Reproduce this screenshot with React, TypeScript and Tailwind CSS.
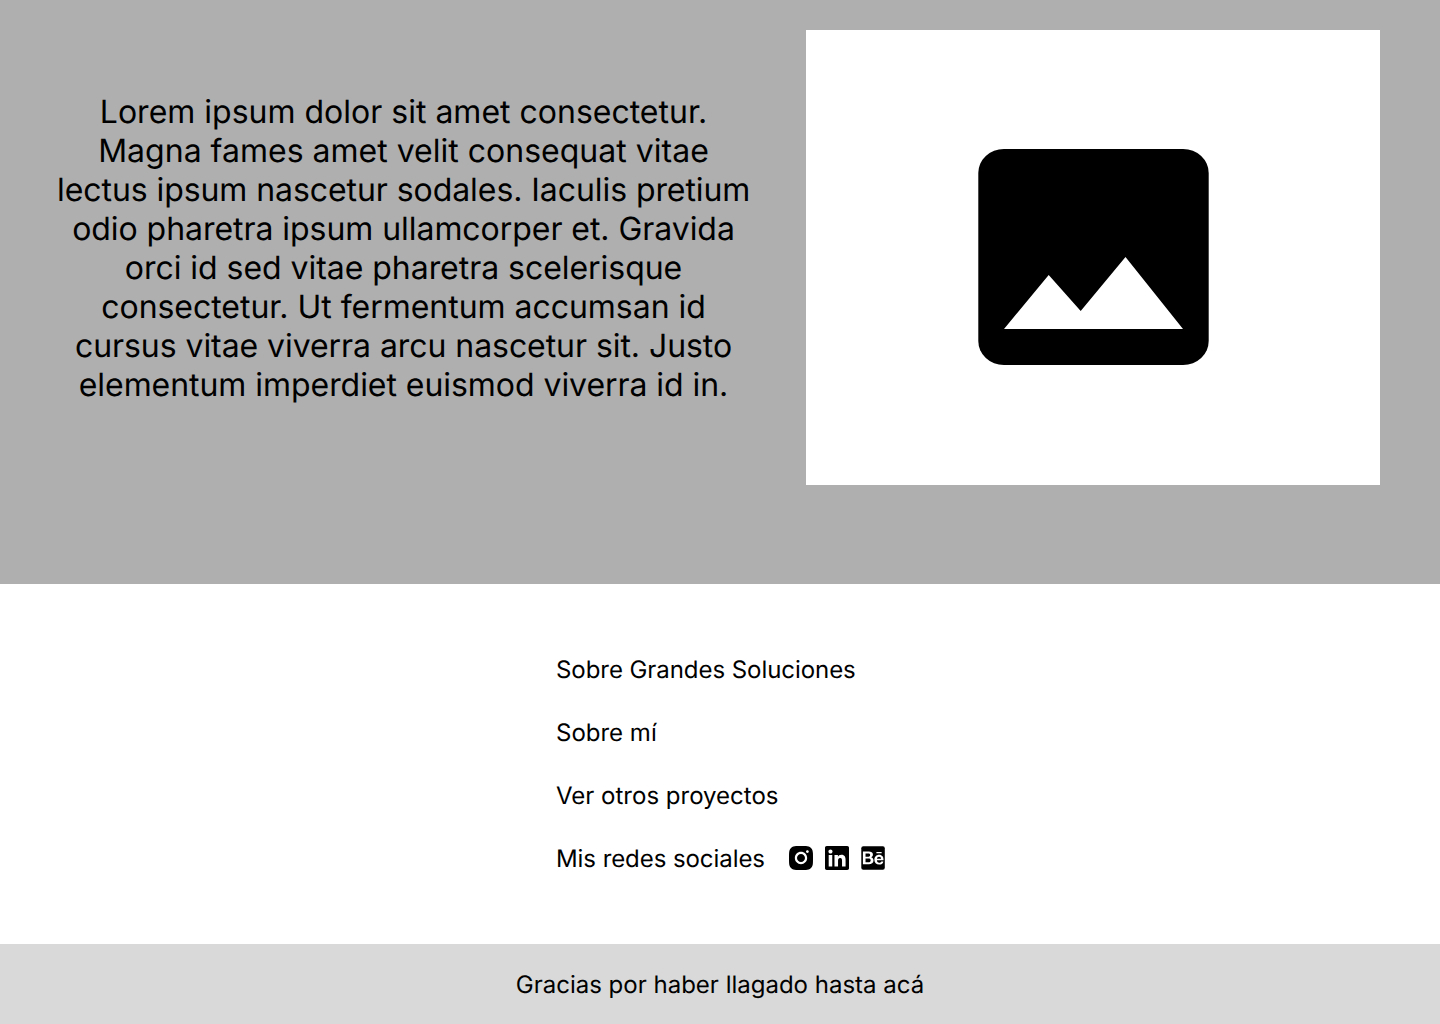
import { AiFillInstagram } from 'react-icons/ai';
import { FaBehance, FaLinkedin } from 'react-icons/fa';

const paragraph = [
  { text: 'Lorem ipsum dolor sit amet consectetur.', tracking: 'tracking-normal' },
  { text: 'Magna fames amet velit consequat vitae', tracking: 'tracking-[0.01px]' },
  { text: 'lectus ipsum nascetur sodales. Iaculis pretium', tracking: 'tracking-[-0.07px]' },
  { text: 'odio pharetra ipsum ullamcorper et. Gravida', tracking: 'tracking-[-0.05px]' },
  { text: 'orci id sed vitae pharetra scelerisque', tracking: 'tracking-[-0.04px]' },
  { text: 'consectetur. Ut fermentum accumsan id', tracking: 'tracking-[-0.03px]' },
  { text: 'cursus vitae viverra arcu nascetur sit. Justo', tracking: 'tracking-[-0.06px]' },
  { text: 'elementum imperdiet euismod viverra id in.', tracking: 'tracking-[-0.05px]' },
];

function PictureIcon() {
  return (
    <svg viewBox="0 0 232 216" className="mb-px h-[216px] w-[232px]">
      <rect x="1.300" width="230.400" height="216" rx="25.600" ry="24" fill="#000" />
      <path d="M27 180 71.700 126 103.700 162 148.500 108 206 180Z" fill="#fff" />
    </svg>
  );
}

function BehanceIcon() {
  return (
    <svg viewBox="0 0 24 24" className="size-6">
      <rect x="0.300" y="0.200" width="23.500" height="23.600" rx="2" />
      <FaBehance x="1.700" y="1.500" size={21} color="#fff" />
    </svg>
  );
}

export default function App() {
  return (
    <div className="flex h-[1024px] w-full flex-col overflow-hidden bg-white font-['Inter',sans-serif] text-black antialiased [text-rendering:geometricPrecision]">
      <section className="flex h-[584px] items-start bg-[#afafaf] pt-[30px] pl-[57px]">
        <p className="mt-[62px] w-[693px] text-center text-[32px] leading-[39px]">
          {paragraph.map(({ text, tracking }) => (
            <span key={text} className={`block whitespace-nowrap ${tracking}`}>{text}</span>
          ))}
        </p>
        <div className="ml-14 flex h-[455px] w-[574px] items-center justify-center bg-white">
          <PictureIcon />
        </div>
      </section>
      <nav className="flex h-[360px] flex-col gap-[34px] pt-[71px] pl-[556px] text-2xl leading-[29px]">
        <a className="tracking-[-0.06px]">Sobre Grandes Soluciones</a>
        <a>Sobre mí</a>
        <a>Ver otros proyectos</a>
        <div className="flex items-start">
          <span className="w-[233px] tracking-[-0.07px]">Mis redes sociales</span>
          <div className="mt-0.5 flex gap-3">
            <AiFillInstagram viewBox="112 112 800 800" className="size-6" />
            <FaLinkedin viewBox="0 32 448 448" className="size-6" />
            <BehanceIcon />
          </div>
        </div>
      </nav>
      <footer className="flex h-20 items-center justify-center bg-[#d9d9d9] pt-px text-2xl leading-[29px]">
        Gracias por haber llagado hasta acá
      </footer>
    </div>
  );
}
